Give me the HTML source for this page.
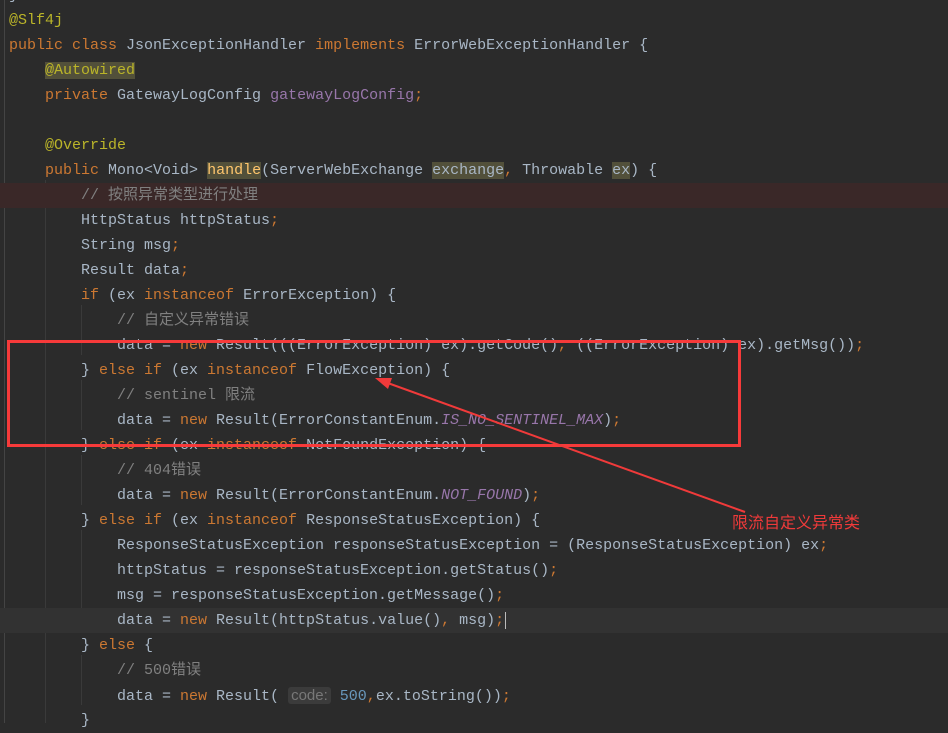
<!DOCTYPE html>
<html><head><meta charset="utf-8"><style>
html,body{margin:0;padding:0;width:948px;height:723px;overflow:hidden;background:#2b2b2b}
.code{position:absolute;left:0;top:0;width:948px;font-family:"Liberation Mono","Noto Sans CJK SC",monospace;font-size:15px;color:#a9b7c6;white-space:pre}
.l{position:absolute;left:0;width:948px;height:25px;line-height:25px;padding-left:9px;box-sizing:border-box}
.k{color:#cc7832}.a{color:#bbb529}.c{color:#808080}.f{color:#9876aa}.n{color:#6897bb}.i{color:#9876aa;font-style:italic}
.h{background:#52503a}
.hint{background:#3b3b3b;color:#787878;border-radius:3px;padding:0 3px;font-family:"Liberation Sans",sans-serif}
.g{position:absolute;width:1px;background:#3a3a3a}
</style></head><body>
<div class="g" style="left:45px;top:180px;height:543px"></div>
<div class="g" style="left:81px;top:305px;height:50px"></div>
<div class="g" style="left:81px;top:380px;height:50px"></div>
<div class="g" style="left:81px;top:455px;height:50px"></div>
<div class="g" style="left:81px;top:530px;height:100px"></div>
<div class="g" style="left:81px;top:655px;height:50px"></div>
<div class="g" style="left:4px;top:0;height:723px;background:#444"></div>
<div class="code">
<div class="l" style="top:-17px">}</div>
<div class="l" style="top:8px"><span class="a">@Slf4j</span></div>
<div class="l" style="top:33px"><span class="k">public class </span>JsonExceptionHandler <span class="k">implements </span>ErrorWebExceptionHandler {</div>
<div class="l" style="top:58px">    <span class="a h">@Autowired</span></div>
<div class="l" style="top:83px">    <span class="k">private </span>GatewayLogConfig <span class="f">gatewayLogConfig</span><span class="k">;</span></div>
<div class="l" style="top:133px">    <span class="a">@Override</span></div>
<div class="l" style="top:158px">    <span class="k">public </span>Mono&lt;Void&gt; <span class="h" style="color:#ffc66d">handle</span>(ServerWebExchange <span class="h">exchange</span><span class="k">, </span>Throwable <span class="h">ex</span>) {</div>
<div class="l" style="top:183px;background:#3a2828">        <span class="c">// 按照异常类型进行处理</span></div>
<div class="l" style="top:208px">        HttpStatus httpStatus<span class="k">;</span></div>
<div class="l" style="top:233px">        String msg<span class="k">;</span></div>
<div class="l" style="top:258px">        Result data<span class="k">;</span></div>
<div class="l" style="top:283px">        <span class="k">if </span>(ex <span class="k">instanceof </span>ErrorException) {</div>
<div class="l" style="top:308px">            <span class="c">// 自定义异常错误</span></div>
<div class="l" style="top:333px">            data = <span class="k">new </span>Result(((ErrorException) ex).getCode()<span class="k">, </span>((ErrorException) ex).getMsg())<span class="k">;</span></div>
<div class="l" style="top:358px">        } <span class="k">else if </span>(ex <span class="k">instanceof </span>FlowException) {</div>
<div class="l" style="top:383px">            <span class="c">// sentinel 限流</span></div>
<div class="l" style="top:408px">            data = <span class="k">new </span>Result(ErrorConstantEnum.<span class="i">IS_NO_SENTINEL_MAX</span>)<span class="k">;</span></div>
<div class="l" style="top:433px">        } <span class="k">else if </span>(ex <span class="k">instanceof </span>NotFoundException) {</div>
<div class="l" style="top:458px">            <span class="c">// 404错误</span></div>
<div class="l" style="top:483px">            data = <span class="k">new </span>Result(ErrorConstantEnum.<span class="i">NOT_FOUND</span>)<span class="k">;</span></div>
<div class="l" style="top:508px">        } <span class="k">else if </span>(ex <span class="k">instanceof </span>ResponseStatusException) {</div>
<div class="l" style="top:533px">            ResponseStatusException responseStatusException = (ResponseStatusException) ex<span class="k">;</span></div>
<div class="l" style="top:558px">            httpStatus = responseStatusException.getStatus()<span class="k">;</span></div>
<div class="l" style="top:583px">            msg = responseStatusException.getMessage()<span class="k">;</span></div>
<div class="l" style="top:608px;background:#323232">            data = <span class="k">new </span>Result(httpStatus.value()<span class="k">, </span>msg)<span class="k">;</span><span style="border-left:1px solid #bbb;margin-left:1px"></span></div>
<div class="l" style="top:633px">        } <span class="k">else </span>{</div>
<div class="l" style="top:658px">            <span class="c">// 500错误</span></div>
<div class="l" style="top:683px">            data = <span class="k">new </span>Result( <span class="hint">code:</span> <span class="n">500</span><span class="k">,</span>ex.toString())<span class="k">;</span></div>
<div class="l" style="top:708px">        }</div>
</div>
<svg width="948" height="723" style="position:absolute;left:0;top:0">
<rect x="8.5" y="341.5" width="731" height="104" fill="none" stroke="#f73a3a" stroke-width="3"/>
<line x1="745" y1="512" x2="385" y2="382" stroke="#f03a3a" stroke-width="2"/>
<polygon points="375,378 392,378 388,389" fill="#f03a3a"/>
<text x="732" y="528" fill="#f03a3a" font-size="16" font-family="Noto Sans CJK SC,sans-serif">限流自定义异常类</text>
</svg>
</body></html>
